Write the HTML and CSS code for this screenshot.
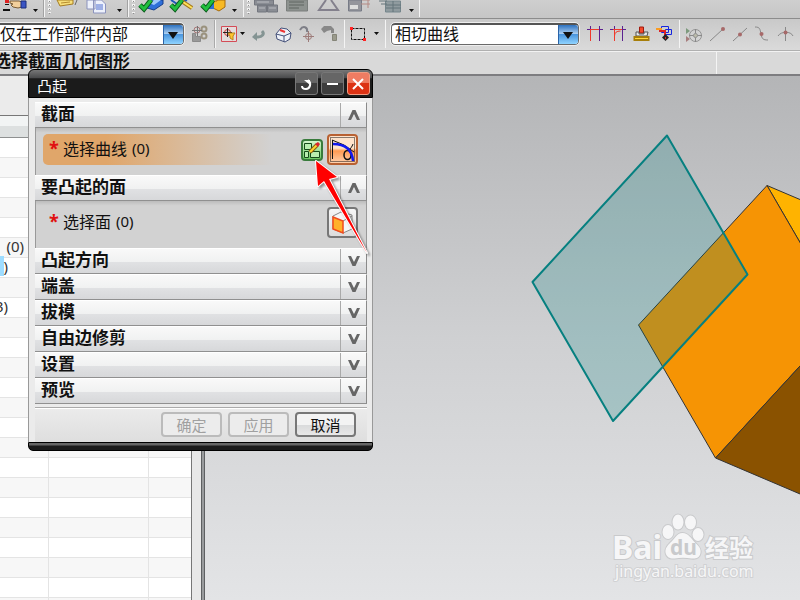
FILE: index.html
```html
<!DOCTYPE html>
<html lang="zh-CN">
<head>
<meta charset="utf-8">
<title>凸起</title>
<link rel="stylesheet" href="styles.css">
</head>
<body>
<div class="app">
  <div class="toolbar toolbar-top">
    <svg class="strip" width="420" height="18" viewBox="0 0 420 18" aria-hidden="true">
      <path fill="#d22" d="M5 0h4v3H5z"/><path fill="#111" d="M5 4h4v1H5zM3 9h7v2H3z"/>
      <path fill="#f2cf9c" stroke="#7a5b35" d="M10 1h9l3 1v5l-4 1-5-1-2-2 2-1-3-1z"/><path fill="#3b55c4" stroke="#1b2f7d" d="M21 1h5v7h-5z"/>
      <g fill="#111"><path d="M33 9h5l-2.500 3zM117 9h5l-2.500 3zM232 9h5l-2.500 3zM409 9h5l-2.500 3z"/></g>
      <g stroke="#f4f4f4"><path d="M44.500 0v17M128.500 0v17M243.500 0v17M419.500 0v17"/></g>
      <g stroke="#a2a2a2"><path d="M43.500 0v17M127.500 0v17"/></g>
      <g stroke="#f3f3f3" stroke-width="3" stroke-dasharray="2 2"><path d="M49.500 0v13M133.500 0v13M248.500 0v13"/></g>
      <g stroke="#8d8d8d" stroke-dasharray="1 3"><path d="M49.500 1v13M133.500 1v13M248.500 1v13"/></g>
      <path fill="#f7df79" stroke="#a57c22" d="M57 0l3 6 13-2V0z"/><path stroke="#b58b2f" d="M61 3l9-1"/><path stroke="#666" fill="none" d="M77 0l-2 5"/>
      <path fill="#edf1fb" stroke="#8b93bd" d="M87 0h8v9h-8zM93.500 0h8l4 4v9h-12z"/><path stroke="#4f6fd0" d="M96 5h7M96 7h7M96 9h7"/>
      <path fill="#2e6fd9" stroke="#153f8b" d="M147 3l6-3h10v4l-9 6-7-2z"/><path fill="#9ec8fa" d="M149 3l5-3h7l-7 5z"/>
      <path fill="none" stroke="#1f59b8" stroke-width="2" d="M171 0l6 4 10-4"/><path fill="none" stroke="#a57a1a" stroke-width="4" d="M180 0l12 8"/><path fill="none" stroke="#ffe05a" stroke-width="2" d="M180 0l12 8"/>
      <path fill="#f7b924" stroke="#a66b0d" d="M213 1h4V0h8v7l-6 4-6-3z"/><path fill="#2e6fd9" d="M208 2l6-2v9h-6z"/>
      <g fill="none" stroke="#0b5d1c" stroke-width="5"><path d="M140 5l4 4 7-9M171 5l4 4 7-9M202 5l4 4 7-9"/></g>
      <g fill="none" stroke="#22bf3f" stroke-width="3"><path d="M140 5l4 4 7-9M171 5l4 4 7-9M202 5l4 4 7-9"/></g>
      <g fill="#8a8d94" stroke="#73767e"><path d="M254.500 0h19v5h-19zM257.500 5h9v7h-9zM267.500 5h10v7h-10z"/></g><path stroke="#b9bbc0" d="M257 2h12M259 8h6M269 8h7"/>
      <path fill="#8d928f" stroke="#7a7e7c" d="M286.500 0h21v11h-21z"/><path stroke="#5f6561" d="M289 2h15M289 5h15M289 8h10"/>
      <path fill="none" stroke="#83808c" stroke-width="2" d="M326 0l-7 10h19l-7-10"/>
      <path fill="#94959c" stroke="#777b86" d="M348.500 0h13v11h-13z"/><path fill="#ddd" d="M350 5h8v4h-8z"/><path stroke="#b48a84" fill="none" d="M361 4h9M368 0v8M362 0h8"/>
      <path fill="#909b9f" stroke="#74858b" d="M385.500 1h15v11h-15z"/><path stroke="#65757a" d="M386 5h15M386 8h15M393 1v11M379 1h8M381 4h6"/>
    </svg>
  </div>

  <div class="toolbar toolbar-select">
    <div class="combo combo-scope">
      <select aria-label="选择范围"><option>仅在工作部件内部</option></select>
      <span class="combo-arrow"></span>
    </div>
    <svg class="strip" width="208" height="32" viewBox="184 19 208 32" aria-hidden="true">
      <path fill="#999" stroke="#8a8a8a" d="M192.500 33.500h3v3h5v5h-8z"/>
      <g fill="none" stroke="#9a927e" stroke-width="2"><circle cx="204" cy="29" r="2.500"/><circle cx="204" cy="36" r="2.500"/></g>
      <circle cx="197" cy="30" r="3" fill="none" stroke="#a87878"/><path stroke="#777" d="M192 30.500h10M197.500 26v10"/>
      <g stroke="#f4f4f4"><path d="M215.500 20v28M344.500 20v28M385.500 20v28"/></g>
      <g stroke="#aaa"><path d="M214.500 20v28"/></g>
      <path fill="#e4dcdc" stroke="#d44c57" d="M221.500 26.500h15v15h-15z"/><circle cx="227.500" cy="32.500" r="3" fill="none" stroke="#c33"/><path stroke="#222" d="M223 32.500h9M227.500 28v9"/><path fill="#ffc62e" stroke="#b9841a" d="M228 33h7l-2 3v4l-3-2v-2z"/>
      <path fill="#111" d="M240 32h5l-2.500 3zM374 32h5l-2.500 3z"/>
      <path fill="none" stroke="#849493" stroke-width="3" d="M262 31c3 3 0 6-4 6h-3"/><path fill="#849493" d="M252 37l5-5v9z"/>
      <path fill="#eef1f8" stroke="#445079" d="M276 34l5-6 6 1 4 4-1 6-5 3-8-3z"/><path fill="none" stroke="#445079" d="M276 34l8 2 7-3M284 36v6"/><path stroke="#e33" stroke-width="2" d="M280 30l5 2"/>
      <path fill="none" stroke="#7e7f87" stroke-width="2" d="M300 30c3-5 8-3 7 2"/><path stroke="#9d7c7a" fill="none" d="M303 36.500h11M308.500 31v11"/><circle cx="308.500" cy="36.500" r="3" fill="none" stroke="#9d7c7a"/>
      <path fill="#888" d="M321 29l3-3h7l3 3v4h-3v-3l-4 1-3 2z"/><path fill="#9b9b8d" stroke="#858578" d="M332.500 34.500h4v6h-4z"/>
      <path fill="none" stroke="#111" stroke-dasharray="3 1" d="M351.500 28.500h13v11h-13z"/><path fill="#f22" d="M350 27h3v3h-3zM363 38h3v3h-3z"/>
    </svg>
    <div class="combo combo-rule">
      <select aria-label="曲线规则"><option>相切曲线</option></select>
      <span class="combo-arrow"></span>
    </div>
    <svg class="strip" width="221" height="32" viewBox="579 19 221 32" aria-hidden="true">
      <path stroke="#5c2190" d="M587 29.500h16M590.500 26v4M599.500 26v15"/><path stroke="#f0392b" fill="none" d="M590 29.500h9M590.500 30v11"/>
      <path stroke="#5c2190" d="M610 29.500h16M614.500 26v4M622.500 26v15"/><path stroke="#f0392b" fill="none" d="M613 29.500h9M614.500 30v11M614.500 36q0-5 6-5"/>
      <path fill="#f34a2b" stroke="#a01a0f" d="M639.500 27h4v6h-4z"/><path fill="#e8e8e8" stroke="#555" d="M636 32h3v2h5v-2h4l-1 4h-11z"/><path fill="none" stroke="#a77e0b" stroke-width="3" d="M635 37.500h5v2h-5zM643 37.500h5v2h-5z"/><path stroke="#ffd83c" d="M635 38.500h13"/>
      <path fill="none" stroke="#1624df" d="M661.500 26.500h7v6h-7zM665.500 29.500h6v5h-6z"/><path stroke="#f99c22" stroke-width="2" d="M656 29h6"/><path fill="none" stroke="#d22" stroke-width="2" d="M659 31h6v5"/><path fill="#222" d="M665.500 34l3.500 3.500-3.500 3.500-3.500-3.500z"/><path fill="#d22" d="M665 37h1v2h-1z"/>
      <path stroke="#f4f4f4" d="M679.500 20v28"/>
      <g stroke="#929292" fill="none"><circle cx="695.500" cy="35.500" r="6"/><path stroke="#8a8a8a" d="M689 35.500h13M695.500 29v13"/><circle cx="695.500" cy="35.500" r="2" fill="#bba"/></g><path fill="#7d9a7d" d="M686 28l4 3-4 3z"/><path fill="#a77d7d" d="M686 36l4 3-4 3z"/>
      <g stroke="#888" fill="none"><path d="M710 41l13-12M733 41l14-13M755 27c5 0 5 2 6 7s2 6 7 6M778 36c3-5 13-5 15 0M785.500 27v14"/></g>
      <g fill="#a76969"><circle cx="723" cy="29" r="2"/><circle cx="740" cy="34.500" r="2"/><circle cx="761.500" cy="34" r="2"/><circle cx="785.500" cy="32.500" r="2"/></g>
    </svg>
  </div>

  <div class="prompt"><p>选择截面几何图形</p><span class="prompt-status"></span></div>

  <main class="workspace">
    <aside class="navigator">
      <div class="nav-title"></div>
      <table>
        <colgroup><col class="c-a"><col class="c-b"><col></colgroup>
        <thead><tr><th></th><th></th><th></th></tr></thead>
        <tbody>
          <tr><td></td><td></td><td></td></tr>
          <tr><td></td><td></td><td></td></tr>
          <tr><td></td><td></td><td></td></tr>
          <tr><td></td><td></td><td></td></tr>
          <tr><td></td><td></td><td></td></tr>
          <tr><td class="val">(0)</td><td></td><td></td></tr>
          <tr><td class="val val-short"><mark>1</mark>)</td><td></td><td></td></tr>
          <tr><td></td><td></td><td></td></tr>
          <tr><td class="val val-short">3)</td><td></td><td></td></tr>
          <tr><td></td><td></td><td></td></tr>
          <tr><td></td><td></td><td></td></tr>
          <tr><td></td><td></td><td></td></tr>
          <tr><td></td><td></td><td></td></tr>
          <tr><td></td><td></td><td></td></tr>
          <tr><td></td><td></td><td></td></tr>
          <tr><td></td><td></td><td></td></tr>
          <tr><td></td><td></td><td></td></tr>
          <tr><td></td><td></td><td></td></tr>
          <tr><td></td><td></td><td></td></tr>
          <tr><td></td><td></td><td></td></tr>
          <tr><td></td><td></td><td></td></tr>
          <tr><td></td><td></td><td></td></tr>
          <tr><td></td><td></td><td></td></tr>
          <tr><td></td><td></td><td></td></tr>
        </tbody>
      </table>
    </aside>
    <div class="splitter"></div>
    <section class="viewport">
      <svg class="scene" viewBox="205 76 595 524" preserveAspectRatio="xMinYMin slice" role="img" aria-label="模型">
        <g stroke="#333" stroke-width="1" stroke-linejoin="round">
          <path fill="#ffb300" d="M767 185.500l73 31v95z"/>
          <path fill="#f69404" d="M767 185.500L638.500 325l77 133L840 322.500v-11z"/>
          <path fill="#8a5200" d="M715.500 458L840 322.500V511z"/>
        </g>
        <path fill="#008080" fill-opacity=".22" stroke="#068080" stroke-width="2" stroke-linejoin="round" d="M667 135.500l80.500 139L613 421l-80.500-139z"/>
      </svg>
      <svg class="watermark" width="148" height="76" viewBox="610 512 148 76" aria-label="Baidu 经验">
        <g class="wm">
          <text x="612" y="559" class="wm-name">Bai</text>
          <ellipse cx="668" cy="532" rx="5.500" ry="7"/><ellipse cx="678" cy="522" rx="5.500" ry="7.500"/><ellipse cx="690.500" cy="522.500" rx="5.500" ry="7"/><ellipse cx="698" cy="534.500" rx="5.500" ry="6.500"/>
          <path d="M682.500 533c6 0 9 6 12 9s7 6 6 11c-1 5-5 6-9 5.500-6-1-11-1-17 0-4 .5-8-1-9-6-.6-4 2-7 5-10 4-3 6-9.500 12-9.500z"/>
          <text x="705" y="557" class="wm-cn">经验</text>
          <text x="615" y="577" class="wm-url">jingyan.baidu.com</text>
        </g>
        <text x="670" y="555" class="wm-du">du</text>
      </svg>
    </section>
  </main>

  <div class="dialog" role="dialog" aria-labelledby="dlg-title">
    <header class="dialog-title">
      <h1 id="dlg-title">凸起</h1>
      <button class="cap" aria-label="重置"><svg width="20" height="20" viewBox="0 0 20 20"><path fill="none" stroke="#fff" stroke-width="2" d="M12 6c4 3 2 9-2 9-2 0-4-1-4-3"/><path fill="#fff" d="M8 6h6v5z"/></svg></button>
      <button class="cap" aria-label="最小化"><svg width="20" height="20" viewBox="0 0 20 20"><path fill="#fff" d="M5 9h11v2H5z"/></svg></button>
      <button class="cap cap-close" aria-label="关闭"><svg width="20" height="20" viewBox="0 0 20 20"><path fill="none" stroke="#fff" stroke-width="2" d="M5 5l10 10M15 5L5 15"/></svg></button>
    </header>
    <div class="dialog-body">
      <section>
        <div class="bar"><h2>截面</h2><button aria-label="折叠截面"><svg width="12" height="10" viewBox="0 0 12 10"><path d="M0 10L4.500 0h3L12 10H9L6 4 3 10z"/></svg></button></div>
        <div class="step">
          <div class="pick pick-active"><b>*</b><span>选择曲线</span><i>(0)</i></div>
          <button class="tool tool-sketch" aria-label="绘制截面"><svg width="18" height="18" viewBox="0 0 18 18"><g fill="#b9eeb0" stroke="#164b1a"><path d="M1.500 2.500h7v6h-7zM1.500 10.500h4v6h-4zM7.500 10.500h9v6h-9z"/></g><path stroke="#8a5b10" stroke-width="4" d="M7 11l7-7"/><path stroke="#ffd52e" stroke-width="2" d="M7 11l7-7"/><path fill="#d9232e" d="M12 3l3-2 2 2-2 3z"/></svg></button>
          <button class="tool tool-curve" aria-label="曲线"><svg width="27" height="27" viewBox="0 0 27 27"><path fill="none" stroke="#111" stroke-dasharray="1 1" d="M1.500 1.500h24v24h-24z"/><path fill="none" stroke="#111" d="M3.500 4v19M3 4l12 5 10 7M24 8c-1 3-3 5-4 6"/><ellipse cx="18.500" cy="19" rx="3.500" ry="4.500" fill="none" stroke="#111" stroke-width="1.500"/><path fill="none" stroke="#1218ee" stroke-width="2.500" d="M4 8c10 0 19 4 20 17"/></svg></button>
        </div>
      </section>
      <section>
        <div class="bar"><h2>要凸起的面</h2><button aria-label="折叠要凸起的面"><svg width="12" height="10" viewBox="0 0 12 10"><path d="M0 10L4.500 0h3L12 10H9L6 4 3 10z"/></svg></button></div>
        <div class="step">
          <div class="pick"><b>*</b><span>选择面</span><i>(0)</i></div>
          <button class="tool tool-face" aria-label="面"><svg width="27" height="27" viewBox="0 0 27 27"><path fill="#f6f6f6" stroke="#888" d="M4 7l8-4 11 3v14l-9 4-10-4z"/><path fill="none" stroke="#888" d="M14 12l9-5"/><path fill="#ffb12b" stroke="#f24a1d" stroke-width="1.500" d="M4 8l10 4v12L4 20z"/></svg></button>
        </div>
      </section>
      <div class="bar"><h2>凸起方向</h2><button aria-label="展开凸起方向"><svg width="12" height="10" viewBox="0 0 12 10"><path d="M0 0L4.500 10h3L12 0H9L6 6 3 0z"/></svg></button></div>
      <div class="bar"><h2>端盖</h2><button aria-label="展开端盖"><svg width="12" height="10" viewBox="0 0 12 10"><path d="M0 0L4.500 10h3L12 0H9L6 6 3 0z"/></svg></button></div>
      <div class="bar"><h2>拔模</h2><button aria-label="展开拔模"><svg width="12" height="10" viewBox="0 0 12 10"><path d="M0 0L4.500 10h3L12 0H9L6 6 3 0z"/></svg></button></div>
      <div class="bar"><h2>自由边修剪</h2><button aria-label="展开自由边修剪"><svg width="12" height="10" viewBox="0 0 12 10"><path d="M0 0L4.500 10h3L12 0H9L6 6 3 0z"/></svg></button></div>
      <div class="bar"><h2>设置</h2><button aria-label="展开设置"><svg width="12" height="10" viewBox="0 0 12 10"><path d="M0 0L4.500 10h3L12 0H9L6 6 3 0z"/></svg></button></div>
      <div class="bar"><h2>预览</h2><button aria-label="展开预览"><svg width="12" height="10" viewBox="0 0 12 10"><path d="M0 0L4.500 10h3L12 0H9L6 6 3 0z"/></svg></button></div>
      <footer class="actions">
        <button disabled>确定</button>
        <button disabled>应用</button>
        <button>取消</button>
      </footer>
    </div>
    <div class="dialog-base"></div>
    <svg class="pointer" width="62" height="102" viewBox="312 157 62 102" aria-hidden="true"><path fill="#f00" stroke="#fff" stroke-width="2" paint-order="stroke" stroke-linejoin="round" d="M316 161l21 16-8 2 38 74-43-72-6 5z"/></svg>
  </div>
</div>
</body>
</html>
```
FILE: styles.css
```css
* { box-sizing: border-box; }

body {
  margin: 0;
  font-family: "Noto Sans", "Noto Sans CJK SC", sans-serif;
  font-size: 16px;
  color: #111;
}

h1, h2, p { margin: 0; font-weight: normal; }
button, select { font: inherit; color: inherit; padding: 0; }
svg { display: block; }

.app {
  position: relative;
  display: flex;
  flex-direction: column;
  height: 100vh;
  overflow: hidden;
  background: #d9d9d9;
}

/* Toolbars */
.toolbar { display: flex; flex: none; overflow: hidden; }
.strip { flex: none; }
.toolbar-top {
  height: 19px;
  background: linear-gradient(#cfcfcf, #c6c6c6);
  border-bottom: 1px solid #8c8c8c;
}
.toolbar-select {
  height: 32px;
  background: linear-gradient(#c9c9c9, #dadada);
  border-bottom: 1px solid #b0b0b0;
}

.combo {
  position: relative;
  flex: none;
  height: 22px;
  margin-top: 4px;
}
.combo-scope { width: 188px; margin-left: -4px; }
.combo-rule { width: 188px; margin-left: -1px; }
.combo select {
  appearance: none;
  display: block;
  width: 100%;
  height: 100%;
  padding: 0 24px 2px 3px;
  border: 1px solid #6a6a6a;
  border-top: 2px solid #555;
  border-radius: 4px;
  outline: 1px solid #eee;
  outline-offset: 0;
  background: #fff;
  line-height: 16px;
}
.combo-arrow {
  position: absolute;
  top: 2px;
  right: 1px;
  width: 20px;
  height: 19px;
  border-left: 1px solid #2a63a8;
  border-radius: 0 3px 3px 0;
  background: linear-gradient(#2c71bf, #a9cdf0 45%, #4b96de 50%, #8fd3ff);
  pointer-events: none;
}
.combo-arrow::after {
  content: "";
  position: absolute;
  left: 4px;
  top: 7px;
  border: 5px solid transparent;
  border-top: 7px solid #111;
  border-bottom: 0;
}

/* Prompt line */
.prompt {
  display: flex;
  flex: none;
  height: 25px;
  background: #d9d9d9;
  border-top: 1px solid #f2f2f2;
  border-bottom: 2px solid #7d7d80;
}
.prompt p {
  flex: 1;
  margin-left: -6px;
  font-size: 17px;
  font-weight: bold;
  line-height: 18px;
}
.prompt-status { width: 84px; border-left: 1px solid #f4f4f4; }

/* Navigator */
.workspace { display: flex; flex: 1; min-height: 0; }
.navigator {
  flex: none;
  width: 192px;
  overflow: hidden;
  background: #fff;
  border-right: 1px solid #777;
}
.nav-title { height: 39px; background: #ebebeb; }
.navigator table {
  width: 100%;
  table-layout: fixed;
  border-collapse: separate;
  border-spacing: 0;
  color: #333;
  font-size: 15px;
  line-height: 16px;
}
.c-a { width: 49px; }
.c-b { width: 100px; }
.navigator th {
  height: 23px;
  padding: 0;
  border-top: 1px solid #777;
  border-bottom: 1px solid #8e9090;
  background: linear-gradient(#f2f4f4 50%, #dde0e0 50%);
}
.navigator td {
  height: 20px;
  padding: 0;
  border-right: 1px solid #e4e4e4;
  border-bottom: 1px solid #e4e4e4;
  vertical-align: top;
}
.navigator td:last-child { border-right: 0; }
.navigator tr:nth-child(even) td { background: #f7f7f7; }
.navigator .val { padding-right: 24px; text-align: right; }
.navigator .val-short { padding-right: 0; text-align: left; text-indent: -5px; }
.navigator mark { background: #9edcff; color: #9edcff; }
.splitter {
  flex: none;
  width: 13px;
  background: #e8e8e8;
  border-right: 1px solid #5e6062;
  box-shadow: inset -2px 0 #999b9d, inset -3px 0 #5e6062;
}

/* Graphics window */
.viewport {
  position: relative;
  flex: 1;
  overflow: hidden;
  background: linear-gradient(#b4b5b7, #cfd0d2 50%, #e3e4e6);
}
.scene { width: 100%; height: 100%; }
.watermark { position: absolute; right: 42px; bottom: 12px; }
.wm {
  fill: #f6f6f7;
  stroke: #c9cacc;
  stroke-width: 2px;
  paint-order: stroke;
}
.wm-name { font-size: 32px; font-weight: bold; }
.wm-cn { font-size: 24px; font-weight: bold; }
.wm-url { font-size: 16px; stroke: #d0d1d3; }
.wm-du { font-size: 21px; font-weight: bold; fill: #c9cacc; }

/* Dialog */
.dialog {
  position: absolute;
  left: 28px;
  top: 69px;
  width: 345px;
}
.dialog-title {
  display: flex;
  align-items: center;
  gap: 3px;
  height: 29px;
  padding: 0 2px 0 8px;
  border: 1px solid #000;
  border-radius: 6px 6px 0 0;
  background: linear-gradient(#777, #48494b 30%, #1b1b1b 32%);
}
.dialog-title h1 {
  flex: 1;
  font-size: 15px;
  line-height: 20px;
  padding-top: 4px;
  color: #fff;
}
.cap {
  width: 23px;
  height: 23px;
  border: 1px solid #777;
  border-radius: 3px;
  background: linear-gradient(#666 45%, #3d3d3d 50%);
}
.cap-close { border-color: #f09a80; background: linear-gradient(#ef7c62 45%, #dc3214 50%); }

.dialog-body {
  padding: 4px 5px 0 6px;
  background: #ebebeb;
  border: 1px solid #999;
  border-width: 0 1px;
}
.bar {
  display: flex;
  height: 26px;
  border-top: 1px solid #fff;
  border-right: 1px solid #8a8a8a;
  border-bottom: 1px solid #909090;
  background: linear-gradient(#f9f9f9, #f0f1f1 55%, #e0e1e3 56%, #d7d8da);
}
.bar h2 {
  flex: 1;
  padding-left: 6px;
  font-size: 17px;
  font-weight: bold;
  line-height: 22px;
}
.bar button {
  display: flex;
  align-items: center;
  justify-content: center;
  width: 26px;
  border: 0;
  border-left: 1px solid #aaa;
  background: none;
}
.bar path { fill: #666; }

.step {
  display: flex;
  align-items: center;
  gap: 4px;
  height: 47px;
  padding: 0 8px 4px 7px;
  border-left: 1px solid #999;
  border-right: 1px solid #999;
  background: linear-gradient(#bcbcbc, #d2d2d2 10%);
}
.pick {
  display: flex;
  align-items: center;
  flex: 1;
  height: 31px;
  padding: 0 0 3px 6px;
  border-radius: 5px;
}
.pick-active { background: linear-gradient(90deg, #e0a66a 25%, #d2d2d2 90%); }
.pick b { width: 14px; font-size: 18px; color: #e01010; line-height: 20px; }
.pick i { margin-left: 5px; font-size: 15px; font-style: normal; }
.tool { display: flex; align-items: center; justify-content: center; border-radius: 4px; }
.tool-sketch {
  width: 22px;
  height: 22px;
  border: 2px solid #397b3c;
  background: linear-gradient(#d4f5cc, #6ecb66);
}
.tool-curve {
  width: 31px;
  height: 31px;
  border: 2px solid #b86132;
  background: linear-gradient(#ffe3cb 45%, #ff9a52 55%, #ffd1ae);
}
.tool-face {
  width: 31px;
  height: 31px;
  border: 2px solid #777;
  background: linear-gradient(#f6f6f6, #dcdcdc);
}

.actions {
  display: flex;
  justify-content: flex-end;
  gap: 6px;
  height: 38px;
  padding: 8px 11px 0 0;
  background: linear-gradient(#ebebeb 3px, #aaa 3px, #aaa 4px, #fff 4px, #fff 5px, #ebebeb 5px, #dedede);
}
.actions button {
  width: 61px;
  height: 25px;
  border: 2px solid #777;
  border-radius: 4px;
  background: linear-gradient(#f3f3f3 50%, #d9dadb 52%, #e8e8e8);
  font-size: 15px;
  line-height: 18px;
}
.actions button:disabled { border-color: #bbb; background: #ececec; color: #a0a0a0; }
.dialog-base {
  height: 9px;
  border: 1px solid #000;
  border-radius: 0 0 5px 5px;
  background: linear-gradient(#666 2px, #1b1b1b 3px);
}
.pointer { position: absolute; left: 284px; top: 88px; filter: drop-shadow(2px 2px 1px #0006); }
```
